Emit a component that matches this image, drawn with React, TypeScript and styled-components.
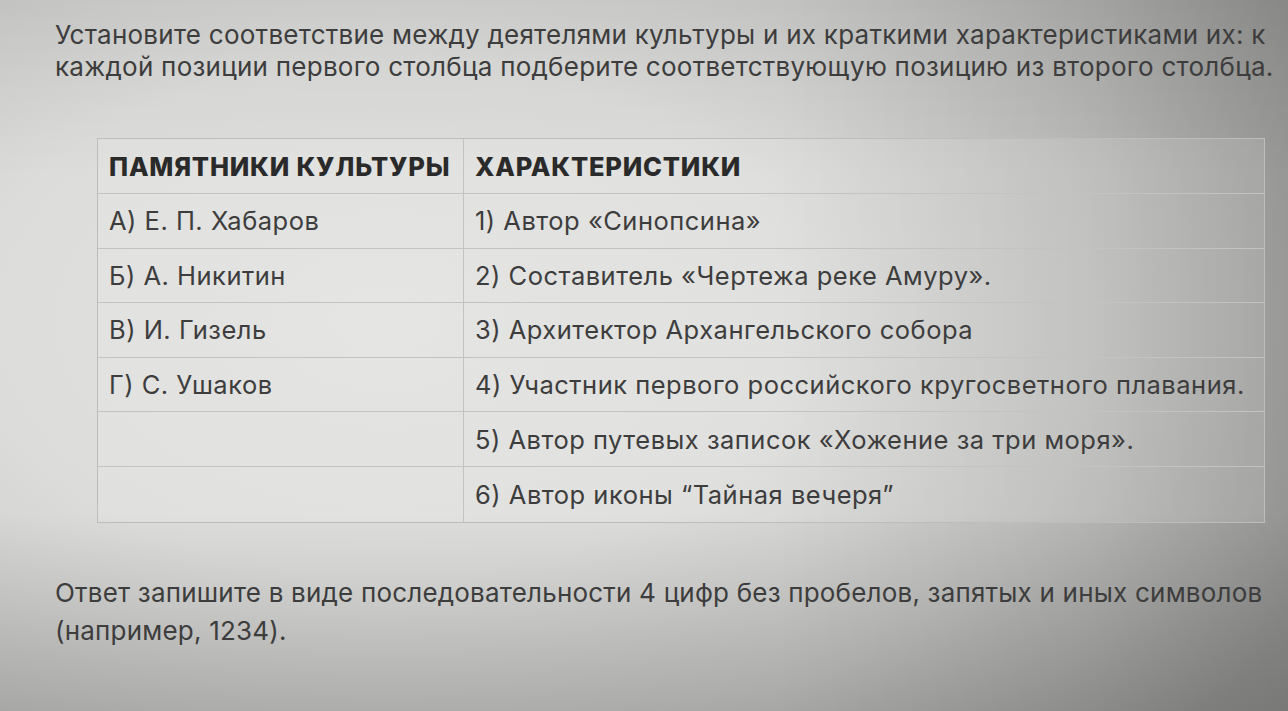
import React from "react";
import styled, { createGlobalStyle } from "styled-components";

const Global = createGlobalStyle`
  html, body { margin: 0; padding: 0; }
  body {
    width: 1288px;
    height: 711px;
    overflow: hidden;
    font-family: Inter, "Noto Sans", "DejaVu Sans", sans-serif;
  }
`;

const Screen = styled.div`
  box-sizing: border-box;
  width: 1288px;
  height: 711px;
  padding: 19px 0 0 55px;
  color: #3b3b3b;
  background:
    linear-gradient(90deg, rgba(0,0,0,0) 0%, rgba(0,0,0,0) 60%, rgba(0,0,0,0.08) 85%, rgba(0,0,0,0.17) 100%),
    linear-gradient(180deg, rgba(0,0,0,0.05) 0%, rgba(0,0,0,0) 25%, rgba(0,0,0,0) 72%, rgba(0,0,0,0.16) 100%),
    radial-gradient(ellipse 80% 90% at 30% 45%, #e2e2e0 0%, #dcdcda 40%, #c8c8c6 70%, #acacaa 100%);
  display: flex;
  flex-direction: column;
`;

const Prompt = styled.p`
  margin: 0;
  font-size: 26px;
  line-height: 32px;
  letter-spacing: 0.25px;
  color: #3d3d3d;
  white-space: nowrap;
`;

const Table = styled.div`
  margin: 55px 0 0 42px;
  width: 1166px;
  display: grid;
  grid-template-columns: 366px 1fr;
  border: 1px solid #bdbdbb;
  background: rgba(255, 255, 255, 0.12);
`;

const Cell = styled.div<{ $head?: boolean; $last?: boolean }>`
  box-sizing: border-box;
  height: ${(p) => (p.$head ? "55px" : "54.6px")};
  display: flex;
  align-items: center;
  padding-left: 11px;
  border-bottom: ${(p) => (p.$last ? "none" : "1px solid #c3c3c1")};
  font-size: 25.5px;
  letter-spacing: ${(p) => (p.$head ? "0.8px" : "0.5px")};
  font-weight: ${(p) => (p.$head ? 800 : 400)};
  color: ${(p) => (p.$head ? "#2a2a2a" : "#3d3d3d")};
  white-space: nowrap;
  &:nth-child(odd) {
    border-right: 1px solid #c3c3c1;
  }
`;

const Answer = styled.p`
  margin: 51px 0 0 0;
  font-size: 26px;
  line-height: 38px;
  letter-spacing: 0.2px;
  color: #3d3d3d;
  white-space: nowrap;
`;

const rows: [string, string][] = [
  ["А) Е. П. Хабаров", "1) Автор «Синопсина»"],
  ["Б) А. Никитин", "2) Составитель «Чертежа реке Амуру»."],
  ["В) И. Гизель", "3) Архитектор Архангельского собора"],
  ["Г) С. Ушаков", "4) Участник первого российского кругосветного плавания."],
  ["", "5) Автор путевых записок «Хожение за три моря»."],
  ["", "6) Автор иконы “Тайная вечеря”"],
];

export default function App() {
  return (
    <>
      <Global />
      <Screen>
        <Prompt>
          Установите соответствие между деятелями культуры и их краткими характеристиками их: к
          <br />
          каждой позиции первого столбца подберите соответствующую позицию из второго столбца.
        </Prompt>
        <Table>
          <Cell $head>ПАМЯТНИКИ КУЛЬТУРЫ</Cell>
          <Cell $head>ХАРАКТЕРИСТИКИ</Cell>
          {rows.map(([a, b], i) => (
            <React.Fragment key={i}>
              <Cell $last={i === rows.length - 1}>{a}</Cell>
              <Cell $last={i === rows.length - 1}>{b}</Cell>
            </React.Fragment>
          ))}
        </Table>
        <Answer>
          Ответ запишите в виде последовательности 4 цифр без пробелов, запятых и иных символов
          <br />
          (например, 1234).
        </Answer>
      </Screen>
    </>
  );
}
